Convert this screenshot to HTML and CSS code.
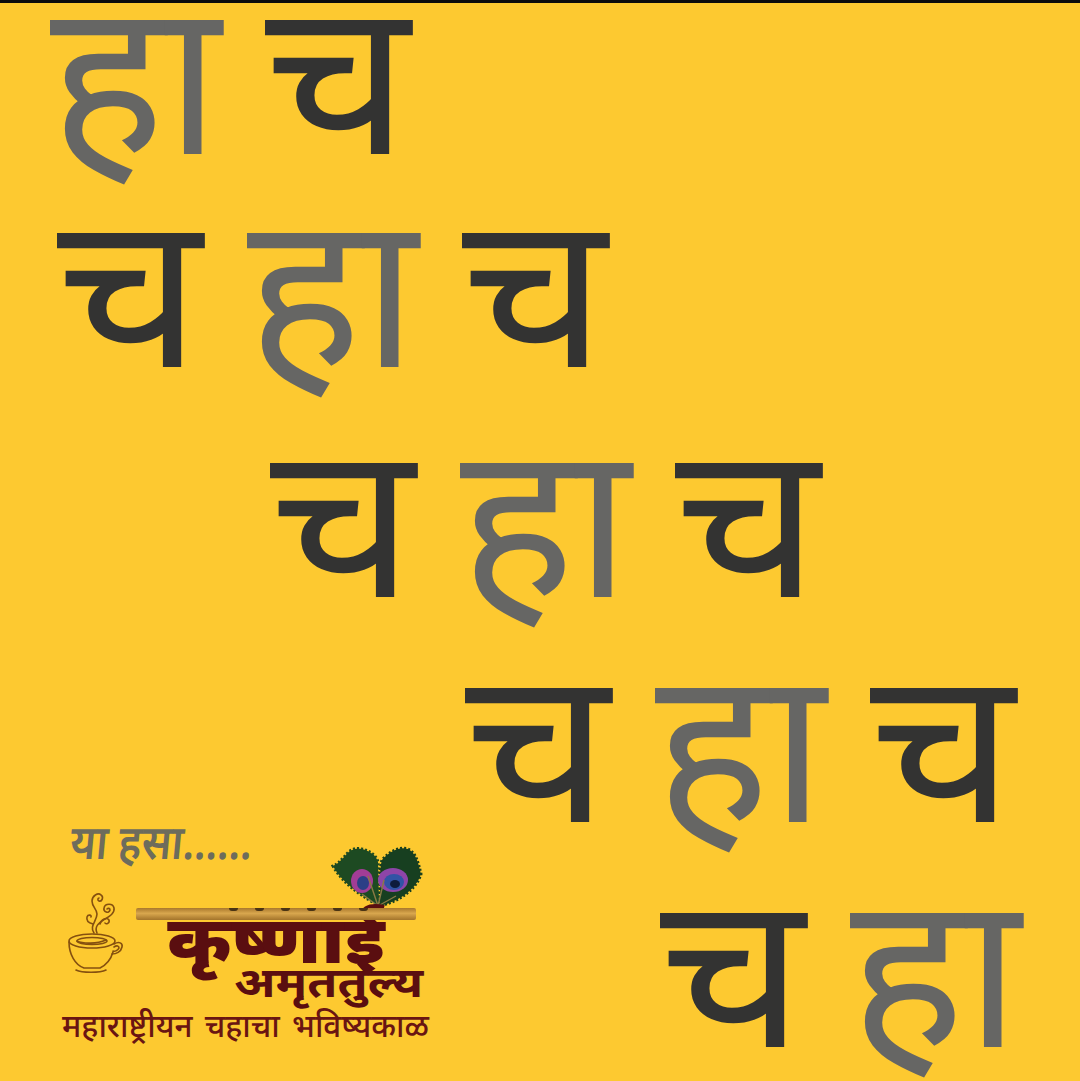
FILE: index.html
```html
<!DOCTYPE html>
<html lang="mr">
<head>
    <meta charset="UTF-8">
    <meta name="viewport" content="width=device-width, initial-scale=1.0">
    <title>हा च चहा</title>
    <link rel="stylesheet" href="styles.css">
</head>
<body>
    <div class="poster">
        <div class="row row-1">
            <span class="word ha">हा</span>
            <span class="word cha">च</span>
        </div>
        <div class="row row-2">
            <span class="word cha">च</span>
            <span class="word ha">हा</span>
            <span class="word cha">च</span>
        </div>
        <div class="row row-3">
            <span class="word cha">च</span>
            <span class="word ha">हा</span>
            <span class="word cha">च</span>
        </div>
        <div class="row row-4">
            <span class="word cha">च</span>
            <span class="word ha">हा</span>
            <span class="word cha">च</span>
        </div>
        <div class="row row-5">
            <span class="word cha">च</span>
            <span class="word ha">हा</span>
        </div>

        <div class="logo">
            <p class="invite">या हसा......</p>
            <div class="brand">
                <svg class="cup" viewBox="0 0 56 84" fill="none" stroke="#85500f" stroke-width="1.6" stroke-linecap="round">
                    <path d="M26 42c-5-7 3-12 3-19 0-5-5-7-5-13 0-5 6-9 9-6 3 2 1 7-2 6-2-1-1-3 0-3"/>
                    <path d="M29 42c-3-7 2-10 8-14 5-3 10-6 9-11-1-5-9-5-10 0-1 4 5 6 6 2 0-2-2-2-3-1"/>
                    <path d="M32 33c1-5 7-7 9-4 1 3-3 5-4 3"/>
                    <path d="M25 33c-4-1-7-3-6-7 1-3 5-2 4 0"/>
                    <ellipse cx="24" cy="50" rx="23" ry="7"/>
                    <ellipse cx="24" cy="50" rx="15" ry="3.5"/>
                    <path d="M9 50c6 3 20 3 29-1"/>
                    <path d="M1 51c0 12 6 23 15 26h16c6-3 11-9 13-16"/>
                    <path d="M46 53c5-3 9-1 8 3-1 5-6 7-10 7"/>
                    <path d="M46 56c3-2 5-1 5 1-1 2-4 4-6 3"/>
                    <path d="M8 79c6 3 24 3 30 0"/>
                </svg>
                <div class="brand-name">
                    <div class="feather">
                        <svg viewBox="0 0 90 62">
                            <path d="M47 60C34 52 12 40 1 20 6 18 9 14 13 10 17 4 24 1 30 3 38 5 44 9 46 16Z" fill="#1d4a22" stroke="#1d4a22" stroke-width="3" stroke-dasharray="2 2"/>
                            <path d="M47 60C50 42 46 26 50 14 56 7 66 0 76 3 84 7 86 16 89 28 84 44 66 56 47 60Z" fill="#173f20" stroke="#173f20" stroke-width="3" stroke-dasharray="2 2"/>
                            <ellipse cx="30" cy="35" rx="11" ry="12" fill="#a23d96"/>
                            <ellipse cx="31" cy="37" rx="6" ry="7" fill="#2c3f86"/>
                            <ellipse cx="61" cy="34" rx="15" ry="12" fill="#8d45a8"/>
                            <ellipse cx="62" cy="36" rx="10" ry="8" fill="#3153a5"/>
                            <ellipse cx="63" cy="38" rx="5" ry="4" fill="#0e1c3c"/>
                            <g stroke="#8a7a44" stroke-width="1.4" fill="none">
                                <path d="M46 60 36 30"/>
                                <path d="M46 60 52 34"/>
                                <path d="M46 60 30 48"/>
                                <path d="M46 60 64 50"/>
                            </g>
                        </svg>
                    </div>
                    <div class="flute">
                        <i></i><i></i><i></i><i></i><i></i><i></i>
                    </div>
                    <p class="name">कृष्णाई</p>
                    <p class="sub">अमृततुल्य</p>
                </div>
            </div>
            <p class="slogan">महाराष्ट्रीयन चहाचा भविष्यकाळ</p>
        </div>
    </div>
</body>
</html>
```
FILE: styles.css
```css
html, body {
    margin: 0;
    height: 100%;
    overflow: hidden;
}

body {
    font-family: "Noto Sans", sans-serif;
}

.poster {
    position: relative;
    height: 1081px;
    box-sizing: border-box;
    border-top: 3px solid #0c0c0c;
    background: #fdc930;
    overflow: hidden;
}

.row {
    display: flex;
    gap: 42px;
    height: 225px;
    font-size: 216px;
    line-height: 135px;
}

.row-1 {
    height: 213px;
    padding-left: 50px;
}

.row-2 {
    height: 230px;
    padding-left: 57px;
}

.row-3 {
    padding-left: 270px;
}

.row-4 {
    padding-left: 465px;
}

.row-5 {
    padding-left: 660px;
}

.ha {
    color: #666664;
}

.cha {
    width: 148px;
    color: #333332;
    transform: scaleX(1.055);
    transform-origin: left center;
}

.ha + .cha {
    margin-left: 2px;
}

/* logo block sits over the empty corner of the poster */
.logo {
    position: absolute;
    left: 62px;
    top: 810px;
    width: 370px;
}

.logo p {
    margin: 0;
}

.invite {
    padding-left: 10px;
    font-size: 48px;
    line-height: 56px;
    font-weight: 600;
    color: #6d6c5c;
    transform: scaleX(.87) skewX(-6deg);
    transform-origin: left center;
}

.brand {
    display: flex;
    margin-top: 39px;
}

.cup {
    width: 56px;
    height: 84px;
    margin-left: 6px;
    margin-top: -17px;
    flex: none;
}

.brand-name {
    position: relative;
    margin-left: 12px;
    width: 294px;
    height: 100px;
}

.feather {
    position: absolute;
    left: 196px;
    top: -62px;
    width: 90px;
    height: 62px;
}

.feather svg {
    display: block;
    width: 100%;
    height: 100%;
    overflow: visible;
}

.flute {
    position: absolute;
    left: 0;
    top: 0;
    width: 280px;
    height: 12px;
    display: flex;
    justify-content: flex-end;
    gap: 17px;
    padding-right: 48px;
    box-sizing: border-box;
    border-radius: 2px;
    background: linear-gradient(#a9782c, #d9a74e 45%, #a3742b);
    z-index: 1;
}

.flute i {
    width: 9px;
    height: 3px;
    border-radius: 0 0 6px 6px;
    background: #4a3415;
}

.name {
    padding-left: 28px;
    font-size: 66px;
    line-height: 58px;
    font-weight: 900;
    color: #5a0e10;
    transform: scaleX(1.12);
    transform-origin: left center;
}

.sub {
    padding-left: 98px;
    font-size: 42px;
    line-height: 30px;
    font-weight: 700;
    color: #5a0e10;
    transform: scaleX(1.16);
    transform-origin: 98px center;
}

.slogan {
    margin-top: 10px;
    margin-left: 3px;
    font-size: 31.5px;
    line-height: 34px;
    font-weight: 500;
    word-spacing: 4px;
    color: #6a1512;
    white-space: nowrap;
}
```
